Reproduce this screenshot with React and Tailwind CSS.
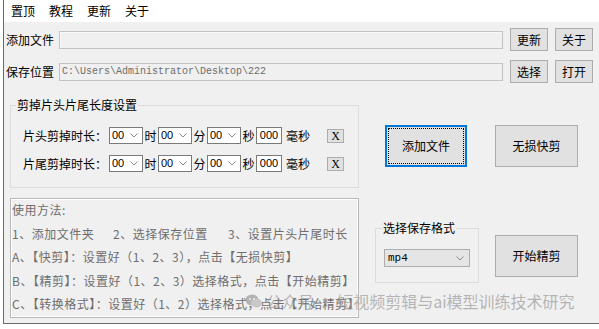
import React from 'react';

const Chevron = ({ className = '' }) => (
  <svg width="8" height="5" viewBox="0 0 8 5" className={className}>
    <path d="M0.5 0.5 L4 4 L7.5 0.5" fill="none" stroke="#8a8a8a" strokeWidth="1" />
  </svg>
);

const Combo = ({ value }) => (
  <div className="w-[34px] h-[17px] border border-[#7a7a7a] bg-white flex items-center justify-between pl-[2px] pr-[4px]">
    <span className="text-[11px] leading-none font-['Liberation_Sans',sans-serif] text-black">{value}</span>
    <Chevron />
  </div>
);

const Btn = ({ children, className = '' }) => (
  <div className={`border border-[#adadad] bg-[#e1e1e1] flex items-center justify-center text-[12px] leading-none text-black ${className}`}>
    {children}
  </div>
);

const TrimRow = ({ label }) => (
  <div className="flex items-center h-[17px] pl-[12px] text-[12px] leading-none text-black">
    <span className="w-[86px]">{label}</span>
    <Combo value="00" />
    <span className="w-[15px] text-center">时</span>
    <Combo value="00" />
    <span className="w-[15px] text-center">分</span>
    <Combo value="00" />
    <span className="w-[15px] text-center">秒</span>
    <div className="w-[26px] h-[17px] border border-[#7a7a7a] bg-white flex items-center justify-center text-[11px] font-['Liberation_Sans',sans-serif]">000</div>
    <span className="ml-[4px] w-[24px]">毫秒</span>
    <Btn className="ml-[17px] w-[17px] h-[14px] text-[10px] text-[#333] font-['Liberation_Serif',serif]">X</Btn>
  </div>
);

export default function App() {
  return (
    <div className="relative w-[599px] h-[329px] bg-white overflow-hidden font-['Noto_Sans_CJK_SC',sans-serif] text-black">
      <div className="ml-[3px] h-[324px] border-l border-b border-[#6a6a6a] flex flex-col">
        {/* menu bar */}
        <div className="h-[22px] bg-white flex items-center pl-[7px] gap-[14px] text-[12px] leading-none">
          <span>置顶</span>
          <span>教程</span>
          <span>更新</span>
          <span>关于</span>
        </div>

        <div className="flex-1 bg-[#f0f0f0] pt-[6px]">
          {/* file row */}
          <div className="flex items-center h-[23px] pl-[2px] text-[12px] leading-none">
            <span className="w-[53px]">添加文件</span>
            <div className="w-[444px] h-[18px] border border-[#c3c3c3] bg-[#f0f0f0] shadow-[inset_1px_1px_0_#fafafa]" />
            <Btn className="ml-[7px] w-[38px] h-[23px]">更新</Btn>
            <Btn className="ml-[7px] w-[38px] h-[23px]">关于</Btn>
          </div>

          {/* save row */}
          <div className="flex items-center h-[23px] mt-[9px] pl-[2px] text-[12px] leading-none">
            <span className="w-[53px]">保存位置</span>
            <div className="w-[444px] h-[18px] border border-[#c3c3c3] bg-[#f0f0f0] flex items-center pl-[2px] text-[10px] text-[#6d6d6d] font-['Liberation_Mono',monospace]">
              C:\Users\Administrator\Desktop\222
            </div>
            <Btn className="ml-[7px] w-[38px] h-[23px]">选择</Btn>
            <Btn className="ml-[7px] w-[38px] h-[23px]">打开</Btn>
          </div>

          <div className="flex mt-[14px] pl-[6px]">
            {/* left column */}
            <div className="w-[349px] flex flex-col">
              <fieldset className="w-[349px] h-[91px] border border-[#dcdcdc]">
                <legend className="ml-[5px] px-[1px] text-[12px] leading-[16px]">剪掉片头片尾长度设置</legend>
                <div className="mt-[14px] flex flex-col gap-[11px]">
                  <TrimRow label="片头剪掉时长：" />
                  <TrimRow label="片尾剪掉时长：" />
                </div>
              </fieldset>

              <div className="mt-[10px] w-[349px] h-[120px] border border-[#b9b9b9] shadow-[inset_1px_1px_0_#ffffff,inset_-1px_-1px_0_#ffffff] pl-[1px] text-[12px] leading-[23.5px] tracking-[0.5px] text-[#6e6e6e]">
                <div className="-mt-[1px]">使用方法:</div>
                <div className="flex">
                  <span className="w-[101px]">1、添加文件夹</span>
                  <span className="w-[115px]">2、选择保存位置</span>
                  <span>3、设置片头片尾时长</span>
                </div>
                <div>A、【快剪】：设置好（1、2、3），点击【无损快剪】</div>
                <div>B、【精剪】：设置好（1、2、3）选择格式，点击【开始精剪】</div>
                <div>C、【转换格式】：设置好（1、2）选择格式，点击【开始精剪】</div>
              </div>
            </div>

            {/* right column */}
            <div className="flex flex-col pl-[16px]">
              <div className="flex mt-[28px] ml-[10px] gap-[28px]">
                <div className="w-[82px] h-[42px] border-2 border-[#0078d7] bg-[#e1e1e1] p-[1px]">
                  <div className="w-full h-full border border-dotted border-black flex items-center justify-center text-[12px] leading-none">添加文件</div>
                </div>
                <Btn className="w-[83px] h-[42px]">无损快剪</Btn>
              </div>

              <div className="flex items-start mt-[53px]">
                <fieldset className="w-[104px] h-[63px] border border-[#dcdcdc]">
                  <legend className="ml-[6px] px-[1px] text-[12px] leading-[16px]">选择保存格式</legend>
                  <div className="mt-[13px] ml-[8px] w-[86px] h-[18px] border border-[#adadad] bg-[#e5e5e5] flex items-center justify-between pl-[3px] pr-[5px]">
                    <span className="text-[11px] leading-none font-['Liberation_Mono',monospace]">mp4</span>
                    <Chevron />
                  </div>
                </fieldset>
                <Btn className="ml-[16px] mt-[15px] w-[83px] h-[42px]">开始精剪</Btn>
              </div>
            </div>
          </div>
        </div>
      </div>

      {/* watermark overlay */}
      <div className="absolute left-[245px] top-[291px] flex items-center text-[16px] leading-[20px] text-[#999999]/70 pointer-events-none">
        <svg width="18" height="16" viewBox="0 0 18 16" className="mr-[3px] opacity-70">
          <ellipse cx="7" cy="7" rx="6.5" ry="5.5" fill="#9a9a9a" />
          <ellipse cx="11.5" cy="10" rx="5.5" ry="4.6" fill="#b8b8b8" />
          <circle cx="5" cy="6" r="0.9" fill="#f0f0f0" />
          <circle cx="9" cy="6" r="0.9" fill="#f0f0f0" />
        </svg>
        <span>公众号 · 短视频剪辑与ai模型训练技术研究</span>
      </div>
    </div>
  );
}
